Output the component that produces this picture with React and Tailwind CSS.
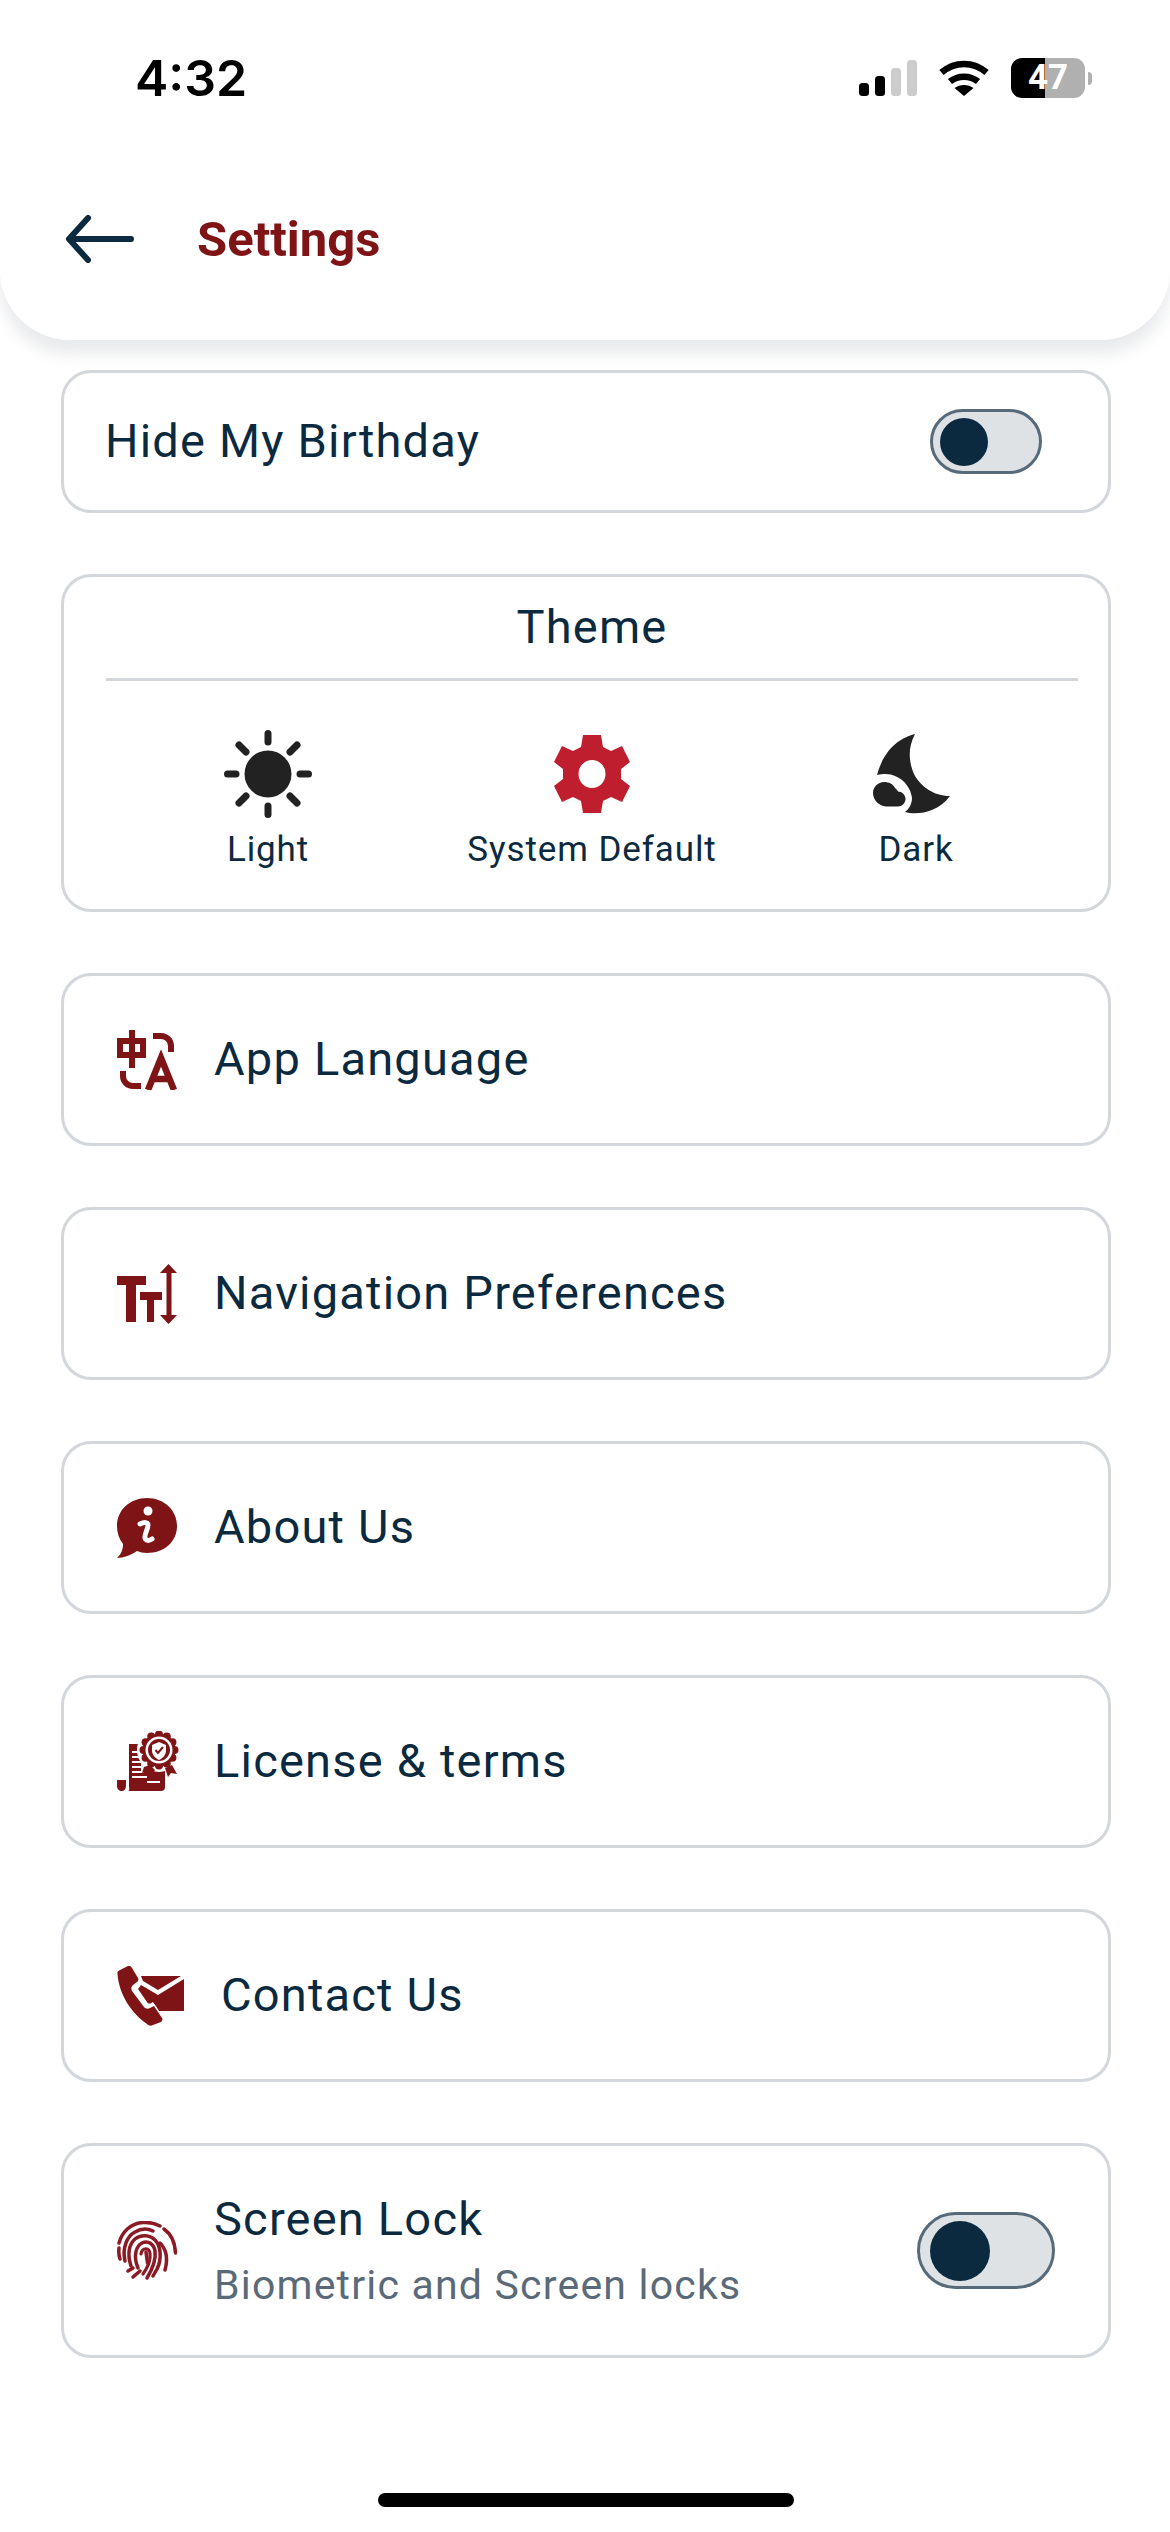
import React from 'react';

const RED = '#7f1416';
const NAVY = '#0b2a40';

const Toggle = ({ large }) => (
    <div className={`flex items-center rounded-full border-[3px] border-[#566a7a] bg-[#dfe2e5] ${large ? 'w-[138px] h-[77px] pl-[10px]' : 'w-[112px] h-[65px] pl-[7px]'}`}>
        <div className={`rounded-full bg-[#0b2a40] ${large ? 'size-[60px]' : 'size-[48px]'}`} />
    </div>
);

const StatusIcons = () => (
    <div className="flex items-center">
        <svg width="58" height="36" viewBox="0 0 58 36">
            <rect x="0" y="23" width="10" height="13" rx="3.5" fill="#000" />
            <rect x="16" y="16" width="10" height="20" rx="3.5" fill="#000" />
            <rect x="32" y="8" width="10" height="28" rx="3.5" fill="#ccc" />
            <rect x="48" y="0" width="10" height="36" rx="3.5" fill="#ccc" />
        </svg>
        <svg className="ml-[22px]" width="50" height="36" viewBox="0 0 50 36" fill="none" stroke="#000" strokeWidth="6.5">
            <path d="M2.5 12.5C15.500 1 34.500 1 47.500 12.500" />
            <path d="M11 21.500C19 15 31 15 39 21.500" />
            <path d="M25 36L15.500 28C21 24 29 24 34.500 28Z" fill="#000" stroke="none" />
        </svg>
        <div className="ml-[22px] flex items-center">
            <div className="w-[74px] h-[40px] rounded-[11px] bg-[linear-gradient(90deg,#000_46%,#b0b0b0_46%)] text-white font-bold text-[35px] leading-[40px] text-center">47</div>
            <div className="ml-[3px] w-[4px] h-[13px] rounded-r-full bg-[#b0b0b0]" />
        </div>
    </div>
);

const SunIcon = () => (
    <svg width="88" height="88" viewBox="0 0 88 88" stroke="#222" strokeWidth="7" strokeLinecap="round">
        <circle cx="44" cy="44" r="23.500" fill="#222" stroke="none" />
        <path d="M44 3.500V12M44 76V84.500M3.500 44H12M76 44H84.500M15 15L22 22M73 15L66 22M15 73L22 66M73 73L66 66" />
    </svg>
);

const GearIcon = () => (
    <svg width="76" height="78" viewBox="0 0 76 78">
        <path
            fillRule="evenodd"
            fill="#be1e2d"
            d="M29 0H47L49 12L57 16L68 11L76 27L67 34V44L76 51L68 67L57 62L49 66L47 78H29L27 66L19 62L8 67L0 51L9 44V34L0 27L8 11L19 16L27 12ZM38 25A13.500 14 0 1 0 38 53A13.500 14 0 1 0 38 25Z"
        />
    </svg>
);

const MoonIcon = () => (
    <svg className="-translate-x-[5px]" width="77" height="80" viewBox="0 0 77 80" fill="#222">
        <path d="M42 0C30 3 12 12 4 41C12 39 18 40 22 42C32 46 38 55 39 64C39 70 36 75 32 78C42 81 64 80 77 62C60 62 48 52 42 42C36 30 34 15 42 0Z" />
        <path d="M11 48C16 48 20 50 22 54C24 56 25 57 25 57.500C29 57.500 32.500 61 32.500 65C32.500 69 29 72.500 25 72.500H13C6 72 0 66 0 59C0 53 5 48 11 48Z" />
    </svg>
);

const LanguageIcon = () => (
    <svg width="60" height="60" viewBox="0 0 60 60" fill="none" stroke={RED} strokeWidth="6">
        <path d="M3 11H26V25H3ZM15 0V38" />
        <path d="M6 41V46A10 10 0 0 0 16 56H24" />
        <path d="M36 6H44A10 10 0 0 1 54 16V22" />
        <path d="M31 60L44 28L57 60M36 49H52" strokeWidth="6.500" />
    </svg>
);

const TextSizeIcon = () => (
    <svg width="60" height="60" viewBox="0 0 60 60" fill={RED}>
        <path d="M0 12H29V21H19V58H9V21H0Z" />
        <path d="M23 28H45V36H37V58H30V36H23Z" />
        <path d="M51.500 0L60 9H54.500V51H60L51.500 60L43 51H49.500V9H43Z" />
    </svg>
);

const InfoIcon = () => (
    <svg width="60" height="60" viewBox="0 0 60 60">
        <path fill={RED} d="M30 0C47 0 60 12 60 28C60 44 47 55 30 55C26 55 23 54 20 53C14 57 7 60 0 60C4 56 6 52 6 46C2 41 0 35 0 28C0 12 13 0 30 0Z" />
        <circle cx="31" cy="13" r="4.500" fill="#fff" />
        <path fill="none" stroke="#fff" strokeWidth="5" strokeLinecap="round" d="M23 26C27 24 31 24 31 27C31 31 27 37 28 40C29 43 32 43 35 41" />
    </svg>
);

const scallops = Array.from({ length: 12 }, (_, i) => i * Math.PI / 6);

const LicenseIcon = () => (
    <svg width="62" height="61" viewBox="0 0 62 61">
        <path fill={RED} d="M12 13H24V40H48V56C48 59 46 60 44 60H11C13 59 12 57 12 55ZM0 49H9V55C9 58 7 60 5 60C2 60 0 58 0 55Z" />
        <path stroke="#fff" strokeWidth="1.800" d="M15 21H24M15 26H24M15 31H24M15 36H26M15 41H27M15 46H30M30 51H43" />
        <circle cx="42" cy="19" r="22" fill="#fff" />
        {scallops.map((a) => (
            <circle key={a} cx={42 + 15.500 * Math.cos(a)} cy={19 + 15.500 * Math.sin(a)} r="4" fill={RED} />
        ))}
        <circle cx="42" cy="19" r="16.500" fill={RED} />
        <circle cx="42" cy="19" r="13.500" fill="#fff" />
        <circle cx="42" cy="19" r="11" fill={RED} />
        <path fill="#fff" d="M42 11L49 14V19C49 24 46 27 42 29C38 27 35 24 35 19V14Z" />
        <path fill="none" stroke={RED} strokeWidth="2" d="M38.500 19L41 22L46 16" />
        <path fill={RED} d="M27 36L33 34L38 39L34 46L30 41L25 42ZM48 37L55 34L60 43L54 42L51 46Z" />
    </svg>
);

const ContactIcon = () => (
    <svg width="67" height="60" viewBox="0 0 67 60">
        <path fill={RED} d="M24 10H64L41 24L26 15Z" />
        <path fill={RED} d="M67 13V45H41L36 36C33 38 31 38 30 36L21 23L24 19L41 29Z" />
        <path
            fill={RED}
            stroke="#fff"
            strokeWidth="3"
            paintOrder="stroke"
            d="M0.5 8C0 6 1 5 3 4L11 0C13 -0.500 14 0 15 2L21 12C22 14 21 15 20 16L16 19C14 21 14 23 15 25L27 41C29 43 31 43 33 42L37 40L45 52C46 54 45 55 44 56L36 59C34 60 32 60 30 58C14 47 2 28 0.500 8Z"
        />
    </svg>
);

const FingerprintIcon = () => (
    <svg width="60" height="60" viewBox="0 0 60 60" fill="none" stroke="#8b1a25" strokeWidth="3.500" strokeLinecap="round">
        <path d="M2 22C5 11 14 2 26 1.500C32 1 38 2.500 43 5" />
        <path d="M47 8C54 13 58 22 58.500 32" />
        <path d="M2 27C1.500 31 2 35 3 38" />
        <path d="M8 40C5 27 10 15 18 11C23 8 30 7 36 10" />
        <path d="M43 22C49 28 51 38 48 49" />
        <path d="M14 45C10 33 12 23 18 18C24 13 33 14 38 19C44 25 45 38 40 48L36 55" />
        <path d="M21 47C16 35 19 25 25 22C31 19 37 23 38 30C39 37 36 47 30 57" />
        <path d="M24 33C25 26 33 26 33 33C34 40 31 46 26 53" strokeWidth="3.200" />
        <path d="M29 31L30.500 42" />
        <path d="M23 50L16 56" />
        <path d="M11 50L16 47" />
    </svg>
);

const Card = ({ className = '', children }) => (
    <div className={`border-[3px] border-[#d3d6da] rounded-[30px] bg-white ${className}`}>{children}</div>
);

const LinkRow = ({ icon, label, gap = 'ml-[30px]' }) => (
    <Card className="flex items-center h-[173px] pl-[53px]">
        <div className="flex w-[67px] shrink-0">{icon}</div>
        <span className={`text-[47px] tracking-[1.2px] ${gap}`}>{label}</span>
    </Card>
);

const ThemeOption = ({ icon, label }) => (
    <div className="flex flex-col items-center">
        <div className="h-[89px] flex items-center">{icon}</div>
        <span className="text-[35px] leading-[48px] mt-[8px] tracking-[0.9px]">{label}</span>
    </div>
);

const App = () => {
    return (
        <div className="relative h-[2532px] w-[1170px] overflow-hidden bg-white font-['Roboto',sans-serif] text-[#0b2a40]">
            {/* Header with status bar */}
            <div className="h-[340px] bg-white rounded-b-[70px] shadow-[0_14px_16px_rgba(40,50,70,0.10)]">
                <div className="flex items-center justify-between h-[158px] pl-[135px] pr-[78px] pb-[2px]">
                    <span className="font-['Inter',sans-serif] font-semibold text-[50px] text-black">4:32</span>
                    <StatusIcons />
                </div>
                <div className="flex items-center pl-[66px] h-[162px]">
                    <svg width="68" height="48" viewBox="0 0 68 48" fill="none" stroke={NAVY} strokeWidth="6" strokeLinecap="round" strokeLinejoin="round">
                        <path d="M65 24H4M22 3L3 24L22 45" />
                    </svg>
                    <span className="ml-[63px] mt-[2px] text-[49px] font-bold text-[#7f1416]">Settings</span>
                </div>
            </div>

            <div className="flex flex-col gap-[61px] pl-[61px] pr-[59px] mt-[30px]">
                <Card className="flex items-center justify-between h-[143px] pl-[41px] pr-[66px]">
                    <span className="text-[47px] tracking-[1.2px]">Hide My Birthday</span>
                    <Toggle />
                </Card>

                <Card className="h-[338px] pl-[42px] pr-[30px]">
                    <div className="h-[104px] border-b-[3px] border-[#d3d6da] flex items-center justify-center">
                        <span className="text-[47px] tracking-[1.2px]">Theme</span>
                    </div>
                    <div className="grid grid-cols-3 mt-[48px]">
                        <ThemeOption icon={<SunIcon />} label="Light" />
                        <ThemeOption icon={<GearIcon />} label="System Default" />
                        <ThemeOption icon={<MoonIcon />} label="Dark" />
                    </div>
                </Card>

                <LinkRow icon={<LanguageIcon />} label="App Language" />
                <LinkRow icon={<TextSizeIcon />} label="Navigation Preferences" />
                <LinkRow icon={<InfoIcon />} label="About Us" />
                <LinkRow icon={<LicenseIcon />} label="License & terms" />
                <LinkRow icon={<ContactIcon />} label="Contact Us" gap="ml-[37px]" />

                <Card className="flex items-center justify-between h-[215px] pl-[53px] pr-[53px]">
                    <div className="flex items-center">
                        <div className="flex w-[67px] shrink-0"><FingerprintIcon /></div>
                        <div className="flex flex-col ml-[30px]">
                            <span className="text-[47px] leading-[60px] tracking-[1.2px]">Screen Lock</span>
                            <span className="text-[41px] leading-[56px] mt-[8px] tracking-[1.2px] text-[#5a6a79]">Biometric and Screen locks</span>
                        </div>
                    </div>
                    <Toggle large />
                </Card>
            </div>

            {/* Home indicator */}
            <div className="absolute bottom-[25px] left-[378px] w-[416px] h-[14px] rounded-full bg-black" />
        </div>
    );
};

export default App;
